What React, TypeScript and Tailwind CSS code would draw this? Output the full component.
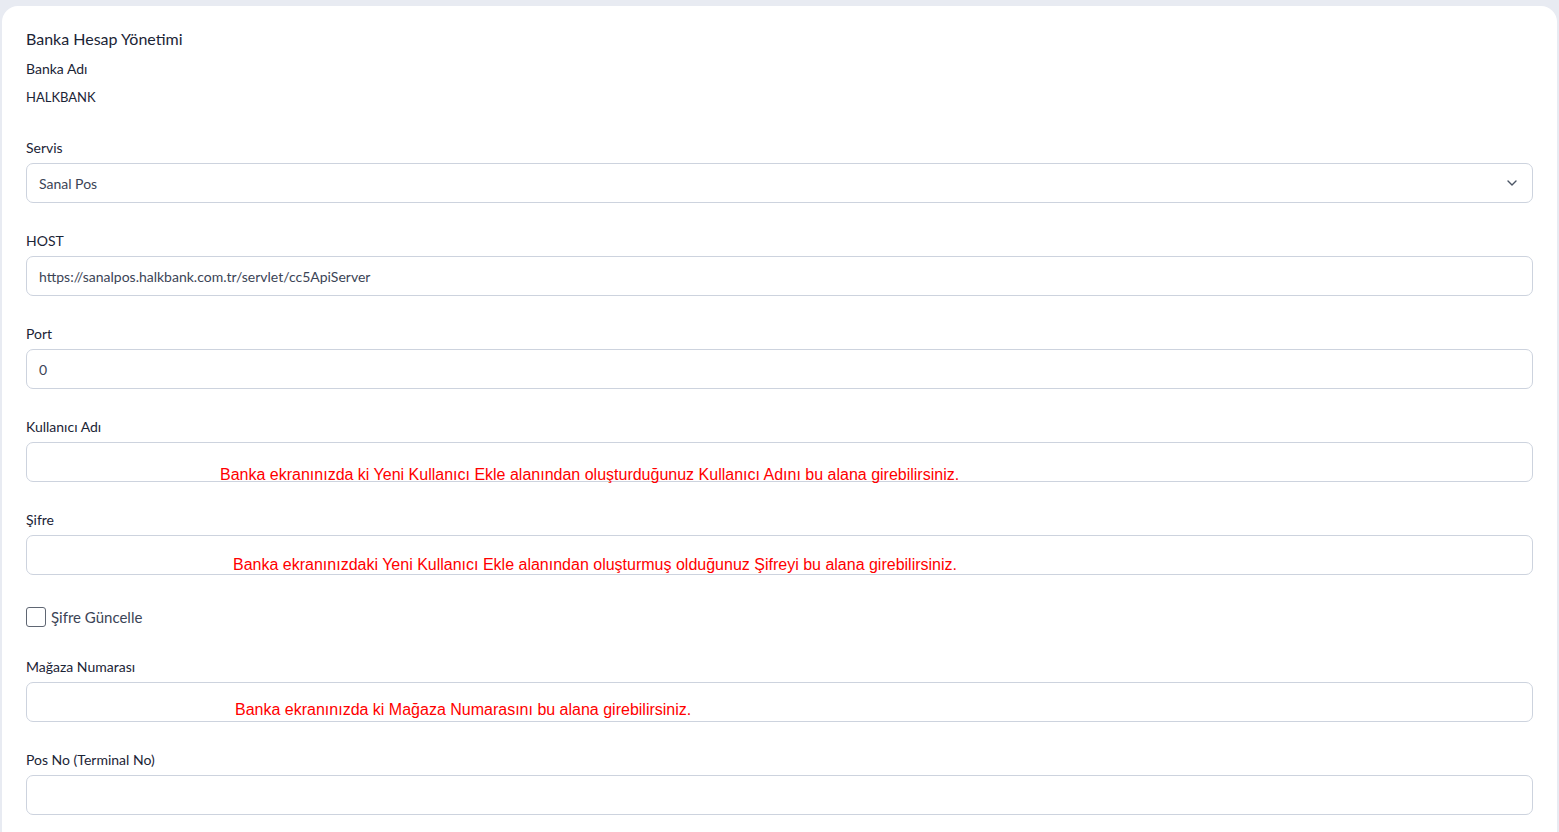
import React from "react";

const Field = ({ label, value, hint, hintLeft, hintTop }: { label: string; value?: string; hint?: string; hintLeft?: number; hintTop?: number }) => (
  <div className="mb-[28px]">
    <div className="text-[14px] leading-[20px] text-[#1b2436] mb-[5px]">{label}</div>
    <div className="relative">
      <div className="h-[40px] rounded-[7px] border border-[#cdd3de] bg-white px-[12px] flex items-center text-[14px] text-[#3b4456]">
        {value}
      </div>
      {hint && (
        <div
          className="absolute text-[16px] leading-[19px] text-[#ff0000] whitespace-nowrap"
          style={{ left: hintLeft, top: hintTop, fontFamily: "'Liberation Sans', Arial, sans-serif" }}
        >
          {hint}
        </div>
      )}
    </div>
  </div>
);

export default function App() {
  return (
    <div className="min-h-[832px] bg-[#e8ebf2] pt-[6px] pl-[2px] pr-[2px]" style={{ fontFamily: "Lato, 'Noto Sans', sans-serif" }}>
      <div className="bg-white rounded-[16px] px-[24px] pt-[22px] pb-[20px]">
        <div className="text-[16px] leading-[22px] text-[#1b2436] mb-[9px]">Banka Hesap Yönetimi</div>
        <div className="text-[14px] leading-[20px] text-[#1b2436] mb-[8px]">Banka Adı</div>
        <div className="text-[13px] leading-[20px] text-[#1b2436] mb-[31px]">HALKBANK</div>

        <div className="mb-[28px]">
          <div className="text-[14px] leading-[20px] text-[#1b2436] mb-[5px]">Servis</div>
          <div className="h-[40px] rounded-[7px] border border-[#cdd3de] bg-white pl-[12px] pr-[14px] flex items-center justify-between text-[14px] text-[#3b4456]">
            <span>Sanal Pos</span>
            <svg width="12" height="12" viewBox="0 0 12 12" fill="none" stroke="#4b5565" strokeWidth="1.4" strokeLinecap="round" strokeLinejoin="round">
              <path d="M2 4l4 4 4-4" />
            </svg>
          </div>
        </div>

        <Field label="HOST" value="https://sanalpos.halkbank.com.tr/servlet/cc5ApiServer" />
        <Field label="Port" value="0" />
        <Field
          label="Kullanıcı Adı"
          hint="Banka ekranınızda ki Yeni Kullanıcı Ekle alanından oluşturduğunuz Kullanıcı Adını bu alana girebilirsiniz."
          hintLeft={194}
          hintTop={23}
        />
        <Field
          label="Şifre"
          hint="Banka ekranınızdaki Yeni Kullanıcı Ekle alanından oluşturmuş olduğunuz Şifreyi bu alana girebilirsiniz."
          hintLeft={207}
          hintTop={20}
        />

        <div className="pt-[4px] mb-[30px]">
          <div className="flex items-center gap-[5px]">
            <div className="w-[20px] h-[20px] rounded-[3px] border border-[#5f6673] bg-white" />
            <span className="text-[15px] leading-[20px] text-[#3b4456]">Şifre Güncelle</span>
          </div>
        </div>

        <Field
          label="Mağaza Numarası"
          hint="Banka ekranınızda ki Mağaza Numarasını bu alana girebilirsiniz."
          hintLeft={209}
          hintTop={18}
        />
        <Field label="Pos No (Terminal No)" />
      </div>
    </div>
  );
}
